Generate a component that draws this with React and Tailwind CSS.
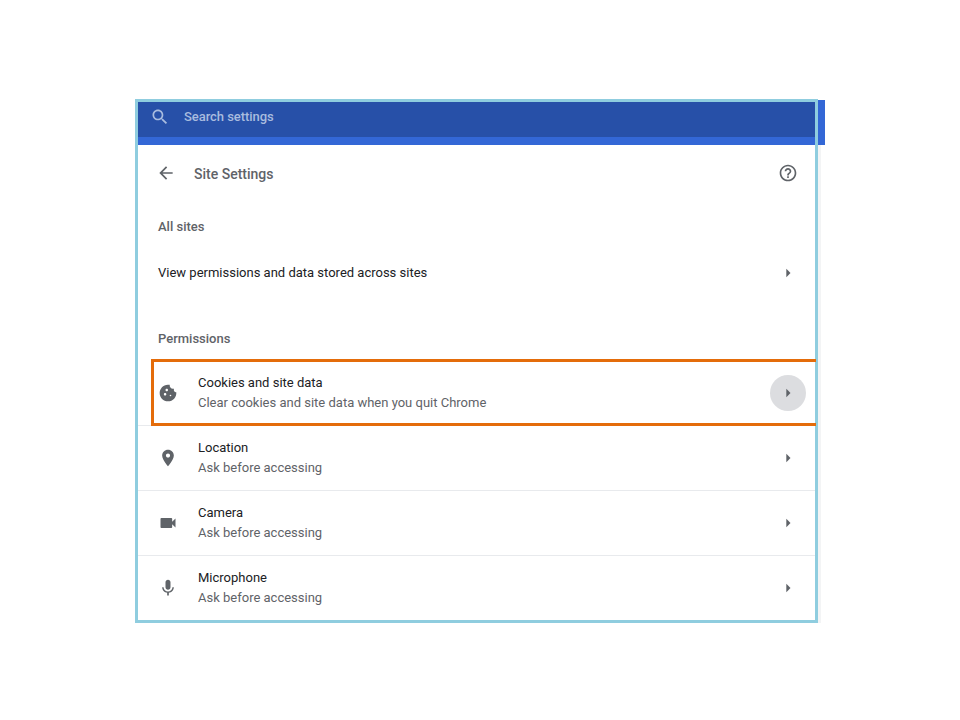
const ICON = {
  search: "M15.5 14h-.79l-.28-.27C15.41 12.59 16 11.11 16 9.5 16 5.91 13.09 3 9.5 3S3 5.91 3 9.5 5.91 16 9.5 16c1.61 0 3.09-.59 4.23-1.57l.27.28v.79l5 4.99L20.49 19l-4.99-5zm-6 0C7.01 14 5 11.99 5 9.5S7.01 5 9.5 5 14 7.01 14 9.5 11.99 14 9.5 14z",
  back: "M20 11H7.83l5.59-5.59L12 4l-8 8 8 8 1.41-1.41L7.83 13H20v-2z",
  help: "M11 18h2v-2h-2v2zm1-16C6.48 2 2 6.48 2 12s4.48 10 10 10 10-4.48 10-10S17.52 2 12 2zm0 18c-4.41 0-8-3.59-8-8s3.59-8 8-8 8 3.59 8 8-3.59 8-8 8zm0-14c-2.21 0-4 1.79-4 4h2c0-1.1.9-2 2-2s2 .9 2 2c0 2-3 1.75-3 5h2c0-2.25 3-2.5 3-5 0-2.21-1.79-4-4-4z",
  right: "M10 17l5-5-5-5v10z",
  cookie: "M21.95 10.99c-1.79-.03-3.7-1.95-2.68-4.22-2.97 1-5.78-1.59-5.19-4.56C7.11.74 2 6.41 2 12c0 5.52 4.48 10 10 10 5.89 0 10.54-5.08 9.95-11.01zM8.5 15c-.83 0-1.5-.67-1.5-1.5S7.67 12 8.5 12s1.5.67 1.5 1.5S9.33 15 8.5 15zm2-5C9.67 10 9 9.33 9 8.5S9.67 7 10.5 7s1.5.67 1.5 1.5-.67 1.5-1.5 1.5zm4.5 6c-.55 0-1-.45-1-1s.45-1 1-1 1 .45 1 1-.45 1-1 1z",
  place: "M12 2C8.13 2 5 5.13 5 9c0 5.25 7 13 7 13s7-7.75 7-13c0-3.87-3.13-7-7-7zm0 9.5c-1.38 0-2.5-1.12-2.5-2.5s1.12-2.5 2.5-2.5 2.5 1.12 2.5 2.5-1.12 2.5-2.5 2.5z",
  camera: "M17 10.5V7c0-.55-.45-1-1-1H4c-.55 0-1 .45-1 1v10c0 .55.45 1 1 1h12c.55 0 1-.45 1-1v-3.5l4 4v-11l-4 4z",
  mic: "M12 14c1.66 0 2.99-1.34 2.99-3L15 5c0-1.66-1.34-3-3-3S9 3.34 9 5v6c0 1.66 1.34 3 3 3zm5.3-3c0 3-2.54 5.1-5.3 5.1S6.7 14 6.7 11H5c0 3.41 2.72 6.23 6 6.72V21h2v-3.28c3.28-.48 6-3.3 6-6.72h-1.7z",
};

function Icon({ d, size = 20, className = "fill-[#5f6368]" }) {
  return (
    <svg width={size} height={size} viewBox="0 0 24 24" className={`shrink-0 ${className}`}>
      <path d={d} />
    </svg>
  );
}

function Row({ icon, title, sub, divider, active }) {
  return (
    <div className={`relative h-[65px] flex items-center ${divider ? "border-t border-[#e8eaed]" : ""}`}>
      <div className="w-[60px] pl-[20px] flex shrink-0">
        <Icon d={icon} />
      </div>
      <div className="flex-1 flex flex-col gap-[4px]">
        <div className="text-[13px] leading-[16px] text-[#202124]">{title}</div>
        <div className="text-[13px] leading-[16px] text-[#5f6368]">{sub}</div>
      </div>
      <div className={`w-[36px] h-[36px] mr-[9px] rounded-full flex items-center justify-center ${active ? "bg-[#dcdde0]" : ""}`}>
        <Icon d={ICON.right} size={20} />
      </div>
    </div>
  );
}

export default function App() {
  return (
    <div className="w-[960px] h-[720px] bg-white overflow-hidden pt-[100px] pl-[135px] [font-family:Roboto,'Liberation_Sans',sans-serif]">
      <div className="relative w-[683px] h-[523px] shadow-[3px_0_0_#f3f4f5]">
        <div className="w-[690px] h-[45px] pt-[2px] bg-[#3367d6]">
          <div className="w-[680px] h-[35px] bg-[#2750a8] flex items-center pl-[15px] pb-[6px]">
            <Icon d={ICON.search} className="fill-[#a9bcdf]" />
            <span className="ml-[14px] text-[13px] font-medium tracking-[-0.05px] text-[#a9bcdf]">Search settings</span>
          </div>
        </div>

        <div className="pl-[3px] pr-[3px] bg-white">
          <div className="h-[56px] flex items-center pl-[18px] pr-[17px]">
            <Icon d={ICON.back} />
            <span className="ml-[18px] mt-[2px] text-[14px] font-medium text-[#5f6368]">Site Settings</span>
            <div className="flex-1" />
            <Icon d={ICON.help} />
          </div>

          <div className="h-[52px] flex items-center pl-[20px] text-[13px] font-medium text-[#5f6368]">All sites</div>

          <div className="h-[40px] flex items-center pl-[20px] pr-[17px] text-[13px] text-[#202124]">
            <span className="flex-1">View permissions and data stored across sites</span>
            <Icon d={ICON.right} />
          </div>

          <div className="h-[67px] pl-[20px] flex items-end pb-[12px] text-[13px] font-medium text-[#5f6368]">Permissions</div>

          <Row icon={ICON.cookie} title="Cookies and site data" sub="Clear cookies and site data when you quit Chrome" active />
          <Row icon={ICON.place} title="Location" sub="Ask before accessing" divider />
          <Row icon={ICON.camera} title="Camera" sub="Ask before accessing" divider />
          <Row icon={ICON.mic} title="Microphone" sub="Ask before accessing" divider />
        </div>

        <div className="absolute -top-[1px] left-0 right-0 bottom-0 border-[3px] border-[#8fcddf] pointer-events-none" />
        <div className="absolute left-[16px] top-[259px] w-[665px] h-[67px] border-[3px] border-r-0 border-[#e46c0a] pointer-events-none" />
      </div>
    </div>
  );
}
